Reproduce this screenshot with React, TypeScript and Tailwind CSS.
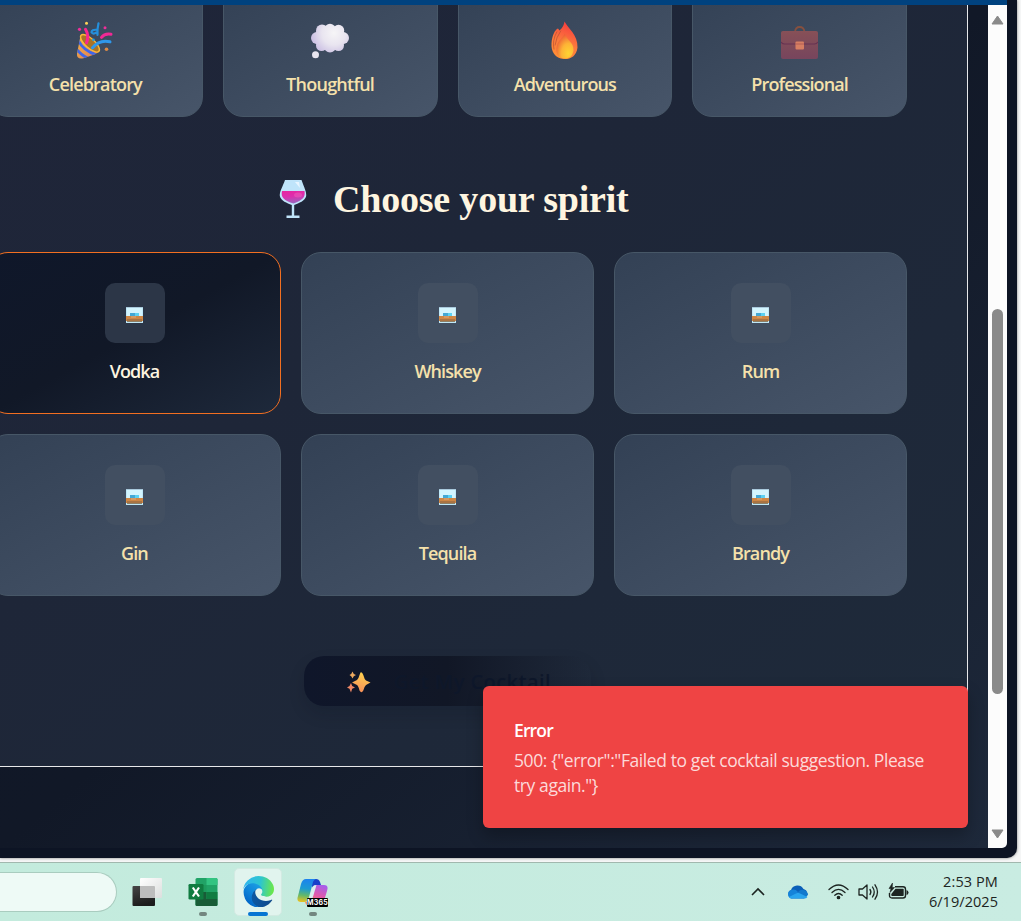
import React from "react";

const PartyIcon = () => (
  <svg width="38" height="40" viewBox="0 0 38 40">
    <defs>
      <linearGradient id="cone" x1="0" y1="0" x2="1" y2="1">
        <stop offset="0" stopColor="#f6b53c" />
        <stop offset="1" stopColor="#dd7a5c" />
      </linearGradient>
      <clipPath id="coneClip">
        <path d="M5 15 Q7 13 13 18 Q24 26 24 30 Q23 33 8 37.500 Q1 39 1.500 33 Z" />
      </clipPath>
    </defs>
    <g transform="translate(-0.5 0.8)">
      <path d="M5 15 Q7 13 13 18 Q24 26 24 30 Q23 33 8 37.500 Q1 39 1.500 33 Z" fill="url(#cone)" />
      <g clipPath="url(#coneClip)" stroke="#3f66e8" strokeWidth="2.800" fill="none">
        <path d="M3 20 Q8 30 21 34" />
        <path d="M0 27 Q4 33 13 38" />
      </g>
      <ellipse cx="14.500" cy="22.500" rx="12" ry="4.700" transform="rotate(42 14.500 22.500)" fill="#a87325" stroke="#fbb93a" strokeWidth="1.400" />
      <g fill="none" strokeLinecap="round" strokeWidth="3">
        <path d="M11 22 Q14 15 10 8.500" stroke="#fb2590" />
        <path d="M26 16.500 Q29 12.500 35.500 13.500" stroke="#f12995" />
        <path d="M17 27 Q24 18.500 34.500 21" stroke="#2f97ea" />
        <path d="M23 2.500 Q21.500 9 22 14 M21.500 9 Q16 8.500 16 11.500 Q17.500 14 21 11.500" stroke="#2590dc" strokeWidth="2.200" />
      </g>
      <circle cx="11" cy="2.500" r="1.500" fill="#ffd257" />
      <circle cx="4" cy="8.500" r="1.600" fill="#ef2e9a" />
      <circle cx="29.500" cy="7" r="1.500" fill="#ef2e9a" />
      <circle cx="31" cy="28.500" r="1.800" fill="#dc8a45" />
      <circle cx="18" cy="19" r="1.300" fill="#1ca0e8" />
    </g>
  </svg>
);

const ThoughtIcon = () => (
  <svg width="38" height="40" viewBox="0 0 38 40">
    <defs>
      <radialGradient id="cloud" gradientUnits="userSpaceOnUse" cx="23" cy="13" r="24">
        <stop offset="0" stopColor="#f6f5f7" />
        <stop offset="0.5" stopColor="#e9e5f0" />
        <stop offset="1" stopColor="#c8bce2" />
      </radialGradient>
    </defs>
    <g fill="url(#cloud)">
      <ellipse cx="19" cy="18" rx="16" ry="12" />
      <circle cx="11" cy="10.500" r="6" />
      <circle cx="19" cy="9.500" r="5.700" />
      <circle cx="27.500" cy="10.500" r="5.700" />
      <circle cx="32" cy="18" r="6" />
      <circle cx="6" cy="18" r="6" />
      <circle cx="10.500" cy="25.500" r="5.500" />
      <circle cx="19" cy="26.500" r="6" />
      <circle cx="27.500" cy="25.500" r="5.500" />
    </g>
    <circle cx="4.500" cy="34.700" r="3.500" fill="#e9e6f0" />
  </svg>
);

const FireIcon = () => (
  <svg width="38" height="40" viewBox="0 0 38 40">
    <defs>
      <linearGradient id="flame" x1="0.8" y1="0" x2="0.5" y2="1">
        <stop offset="0" stopColor="#f6353e" />
        <stop offset="0.6" stopColor="#fb7a3d" />
        <stop offset="1" stopColor="#ff8d36" />
      </linearGradient>
      <radialGradient id="core" cx="0.7" cy="0.8" r="0.8">
        <stop offset="0" stopColor="#ffd432" />
        <stop offset="0.5" stopColor="#fdb336" />
        <stop offset="1" stopColor="#ec5c36" />
      </radialGradient>
    </defs>
    <g transform="translate(-1 0.5)">
      <path d="M19.500 1 C23 8 33 14 32.500 27 C31.500 36 25 39 19 38.500 C10 38 6 31 6.500 23 C7 15 10 9 13 8 L14.500 10 C18 7 19 4 19.500 1Z" fill="url(#flame)" />
      <path d="M12 11 Q7 20 9 29 M16 10 Q11 17 10 25" stroke="#ba5032" fill="none" opacity="0.700" />
      <path d="M20 13 C21 20 29 21 28.500 30 C27.500 36 24 38 20 38 C13 38 10 32 12 25 C13 20 18 17 20 13Z" fill="url(#core)" />
    </g>
  </svg>
);

const CaseIcon = () => (
  <svg width="38" height="40" viewBox="0 0 38 40">
    <defs>
      <linearGradient id="case" x1="0" y1="0" x2="0" y2="1">
        <stop offset="0" stopColor="#875057" />
        <stop offset="1" stopColor="#77455d" />
      </linearGradient>
    </defs>
    <path d="M14 12 Q14.500 7 18.500 7 Q23 7 23.500 12" fill="none" stroke="#86503f" strokeWidth="1.800" />
    <rect x="0" y="11" width="37" height="28" rx="2" fill="url(#case)" />
    <path d="M0 22 Q1.500 24 3.500 24 H33.500 Q35.500 24 37 22" fill="none" stroke="#663252" strokeWidth="1.200" />
    <rect x="14.500" y="21.500" width="8.500" height="8" rx="1" fill="#d77e62" />
    <path d="M14.500 24 H23" stroke="#b35c54" />
  </svg>
);

const WineIcon = () => (
  <svg width="28" height="40" viewBox="0 0 28 40">
    <defs>
      <linearGradient id="wine" x1="0" y1="0" x2="0.2" y2="1">
        <stop offset="0" stopColor="#e8259f" />
        <stop offset="0.5" stopColor="#dc2fae" />
        <stop offset="1" stopColor="#9d62bd" />
      </linearGradient>
    </defs>
    <path d="M6 1 H22.500 C25 8 27.700 13 27.200 17 C26 22 20 24 15.200 26 V36.500 H20.500 V39 H7.500 V36.500 H12.800 V26 C8 24 2 22 0.800 17 C0.500 12 4 7 6 1Z" fill="#bfe4fa" />
    <path d="M3 12 H25.500 C26.500 18 24 21 14.500 24.500 C5 22 1.500 18 3 12Z" fill="url(#wine)" />
    <ellipse cx="19" cy="16" rx="4" ry="2.500" fill="#f56fc0" opacity="0.400" />
    <path d="M16 3 H20 L21 9 Z" fill="#e8f5ff" />
  </svg>
);

const SparkleIcon = () => (
  <svg className="mt-[3px]" width="24" height="24" viewBox="0 0 24 24">
    <defs>
      <linearGradient id="spark" x1="0.6" y1="0" x2="0.3" y2="1">
        <stop offset="0" stopColor="#ffd34e" />
        <stop offset="1" stopColor="#f78c5a" />
      </linearGradient>
    </defs>
    <path d="M13.500 1.500 Q15 0.500 16.300 4 Q17.500 8.500 19 9.500 L23.500 11.500 L19 14 Q17.500 15 16.300 19.500 Q14.500 23 12.500 19.500 Q11.500 15 10 14 L5 11.500 L10 9 Q11.500 8 12.500 4Z" fill="url(#spark)" />
    <path d="M5.500 0.500 L6.800 3 L9 4 L6.800 5.200 L5.500 7.500 L4.200 5.200 L2.500 4 L4.200 3Z" fill="#eca95f" />
    <path d="M4 12 L5.200 15 L8 16.500 L5.200 17.700 L4 21.500 L2.500 17.700 L0 16.500 L2.500 15Z" fill="#ef8866" />
  </svg>
);

const TumblerIcon = () => (
  <svg width="17" height="16" viewBox="0 0 17 16" shapeRendering="crispEdges">
    <rect width="17" height="16" fill="#bfe8f8" />
    <rect x="1" y="1" width="15" height="9" fill="#d3f5fe" />
    <rect width="17" height="1" fill="#a9c9dc" />
    <rect x="4" y="6" width="9" height="3" fill="#5bd1f2" />
    <rect x="4" y="6" width="5" height="3" fill="#43a8d5" />
    <rect y="9" width="17" height="5" fill="#cf8745" />
    <rect x="5" y="9" width="5" height="2" fill="#d49a62" />
    <rect x="1" y="12" width="15" height="2" fill="#a97443" />
    <rect x="1" y="14" width="15" height="1" fill="#8c8068" />
  </svg>
);

const moods = [
  { name: "Celebratory", icon: <PartyIcon />, tracking: "tracking-[-0.82px]" },
  { name: "Thoughtful", icon: <ThoughtIcon />, tracking: "tracking-[-0.75px]" },
  { name: "Adventurous", icon: <FireIcon />, tracking: "tracking-[-0.9px]" },
  { name: "Professional", icon: <CaseIcon />, tracking: "tracking-[-0.88px]" },
];

const spirits = ["Vodka", "Whiskey", "Rum", "Gin", "Tequila", "Brandy"];

function MoodCard({ name, icon, tracking }: { name: string; icon: React.ReactNode; tracking: string }) {
  return (
    <div className="flex h-[132px] flex-col items-center rounded-[20px] border border-[#475767] bg-linear-to-br from-[#334155] to-[#475569] pt-[34px]">
      {icon}
      <span className={`mt-[11px] text-[18px] leading-[26px] font-semibold text-[#f5e1ab] ${tracking}`}>{name}</span>
    </div>
  );
}

function SpiritCard({ name, selected }: { name: string; selected: boolean }) {
  return (
    <div
      className={`flex h-[162px] flex-col items-center rounded-[20px] border pt-[30px] ${
        selected
          ? "border-[#f26f21] bg-linear-to-br from-[#0f172a] via-[#111827] to-[#1e293b]"
          : "border-[#475767] bg-linear-to-br from-[#334155] to-[#475569]"
      }`}
    >
      <div className={`flex size-[60px] items-center justify-center rounded-[10px] pt-[4px] ${selected ? "bg-[#2c3647]" : "bg-[#424f61]"}`}>
        <TumblerIcon />
      </div>
      <span className={`mt-[15px] text-[18px] leading-[26px] font-semibold tracking-[-0.9px] ${selected ? "text-[#fef5e0]" : "text-[#f5e1ab]"}`}>
        {name}
      </span>
    </div>
  );
}

function Toast() {
  return (
    <div className="absolute top-[681px] left-[483px] h-[142px] w-[485px] rounded-[6px] bg-[#ef4444] pt-[31px] pl-[31px] shadow-[0_8px_16px_rgba(0,0,0,0.25)]">
      <div className="text-[17.5px] leading-[26px] font-semibold tracking-[-0.85px] text-white">Error</div>
      <div className="mt-[5px] text-[17.5px] leading-[25px] tracking-[-0.41px] text-[#fcdada]">
        500: {'{"error":"Failed to get cocktail suggestion. Please'}
        <br />
        {'try again."}'}
      </div>
    </div>
  );
}

function Scrollbar() {
  return (
    <div className="flex w-[19px] flex-col items-center rounded-br-[5px] bg-[#fcfcfc] pt-[9px] pb-[8px]">
      <svg width="15" height="12" viewBox="0 0 15 12">
        <path d="M7.500 2 L13 10 H2Z" fill="#8a8a8a" stroke="#8a8a8a" strokeLinejoin="round" />
      </svg>
      <div className="mt-[283px] h-[385px] w-[11px] rounded-full bg-[#8a8a8a]" />
      <div className="grow" />
      <svg width="15" height="12" viewBox="0 0 15 12">
        <path d="M7.500 10 L13 2 H2Z" fill="#8a8a8a" stroke="#8a8a8a" strokeLinejoin="round" />
      </svg>
    </div>
  );
}

function BrowserWindow() {
  return (
    <div className="h-[858px] w-[1017px] rounded-br-[10px] bg-[#0d1424] pr-[10px] shadow-[0_0_3px_rgba(0,0,0,0.5)]">
      <div className="h-[5px] bg-[#00427f]" />
      <div className="relative flex h-[843px] overflow-hidden">
        <div className="w-[988px] overflow-hidden bg-linear-to-br from-[#0f172a] via-[#111827] to-[#1e293b]">
          <main className="flex h-[762px] w-[968px] flex-col border-r border-b border-[#e7e8ea] bg-linear-to-br from-[#1f2539] via-[#1e2638] via-40% to-[#1e2a3a]">
            <div className="-mt-[20px] -ml-[12px] w-[919px]">
              <div className="grid grid-cols-4 gap-[20px]">
                {moods.map((m) => (
                  <MoodCard key={m.name} {...m} />
                ))}
              </div>
              <div className="mt-[58px] flex h-[48px] items-center pl-[291px]">
                <WineIcon />
                <h2 className="ml-[26px] font-['Liberation_Serif',serif] text-[38px] leading-[48px] font-bold tracking-[-0.2px] text-[#fef5e0]">
                  Choose your spirit
                </h2>
              </div>
              <div className="mt-[29px] grid grid-cols-3 gap-[20px]">
                {spirits.map((s) => (
                  <SpiritCard key={s} name={s} selected={s === "Vodka"} />
                ))}
              </div>
              <button className="mx-auto mt-[60px] flex h-[50px] w-[287px] items-center justify-between rounded-[20px] bg-linear-to-r from-[#0f162a] via-[#111726] via-50% to-transparent pr-[40px] pl-[43px] shadow-[0_8px_16px_rgba(10,16,30,0.15)]">
                <SparkleIcon />
                <span className="pt-[1px] text-[20px] font-semibold tracking-[0.45px] text-[#0e172a]">Get My Cocktail</span>
              </button>
            </div>
          </main>
        </div>
        <Scrollbar />
        <Toast />
      </div>
    </div>
  );
}

const TaskViewIcon = () => (
  <svg width="30" height="30" viewBox="0 0 30 30">
    <defs>
      <linearGradient id="tvb" x1="0" y1="0" x2="0.3" y2="1">
        <stop offset="0" stopColor="#454545" />
        <stop offset="1" stopColor="#1c1c1c" />
      </linearGradient>
      <linearGradient id="tvf" x1="0" y1="0" x2="1" y2="1">
        <stop offset="0" stopColor="#ffffff" />
        <stop offset="1" stopColor="#dcdedd" />
      </linearGradient>
    </defs>
    <rect x="0.500" y="9" width="22.500" height="20" rx="1" fill="url(#tvb)" />
    <rect x="8" y="1" width="22" height="20" rx="1" fill="url(#tvf)" />
    <path d="M8 9 H22 Q23 9 23 10 V21 H9 Q8 21 8 20Z" fill="#bdbdbd" />
  </svg>
);

const ExcelIcon = () => (
  <svg width="30" height="30" viewBox="0 0 30 30">
    <rect x="7.500" y="1" width="22" height="28" rx="1.500" fill="#21a366" />
    <path d="M18.500 1 H28 Q29.500 1 29.500 2.500 V8 H18.500Z" fill="#33c481" />
    <rect x="7.500" y="8" width="11" height="7" fill="#1d9c5d" />
    <rect x="7.500" y="15" width="11" height="7" fill="#185c37" />
    <rect x="18.500" y="15" width="11" height="7" fill="#107c41" />
    <path d="M7.500 22 H29.500 V27.500 Q29.500 29 28 29 H9 Q7.500 29 7.500 27.500Z" fill="#185c37" />
    <rect x="0.500" y="7" width="15" height="15.500" rx="1.300" fill="#107c41" />
    <path d="M4.800 10.500 L11 19.500 M11 10.500 L4.800 19.500" stroke="#fff" strokeWidth="2.200" />
  </svg>
);

const EdgeIcon = () => (
  <svg className="shrink-0" width="31" height="31" viewBox="0 0 256 256">
    <defs>
      <linearGradient id="e1" x1="60" y1="177" x2="240" y2="177" gradientUnits="userSpaceOnUse">
        <stop offset="0" stopColor="#0c59a4" />
        <stop offset="1" stopColor="#114a8b" />
      </linearGradient>
      <linearGradient id="e2" x1="153" y1="90" x2="45" y2="220" gradientUnits="userSpaceOnUse">
        <stop offset="0" stopColor="#1b9de2" />
        <stop offset="0.5" stopColor="#0f86db" />
        <stop offset="1" stopColor="#0468c8" />
      </linearGradient>
      <linearGradient id="e3" x1="10" y1="60" x2="250" y2="90" gradientUnits="userSpaceOnUse">
        <stop offset="0" stopColor="#2fb6ef" />
        <stop offset="0.55" stopColor="#2dc5cf" />
        <stop offset="1" stopColor="#6ae74b" />
      </linearGradient>
    </defs>
    <path fill="url(#e1)" d="M235.700 195.500a93.700 93.700 0 0 1-10.600 4.700 101.900 101.900 0 0 1-35.900 6.400c-47.300 0-88.500-32.500-88.500-74.300a31.500 31.500 0 0 1 16.400-27.300c-42.800 1.800-53.800 46.400-53.800 72.500 0 74 68.100 81.400 82.800 81.400 7.900 0 19.800-2.300 27-4.600l1.300-.4a128.300 128.300 0 0 0 66.600-52.800 4 4 0 0 0-5.300-5.600z" />
    <path fill="url(#e2)" d="M110.300 246.300A79.200 79.200 0 0 1 87.600 225a80.700 80.700 0 0 1 29.500-120c3.200-1.500 8.500-4.100 15.600-4a32.400 32.400 0 0 1 25.700 13 31.900 31.900 0 0 1 6.300 18.700c0-.2 24.500-79.600-80-79.600-43.900 0-80 41.700-80 78.200a130.200 130.200 0 0 0 12.100 56 128 128 0 0 0 156.400 67 75.500 75.500 0 0 1-62.800-8z" />
    <path fill="url(#e3)" d="M152.300 148.900c-.8 1-3.300 2.500-3.300 5.700 0 2.600 1.700 5.100 4.700 7.200 14.400 10 41.500 8.700 41.600 8.700a59.600 59.600 0 0 0 30.300-8.300 61.400 61.400 0 0 0 30.400-52.900c.3-22.400-8-37.300-11.300-43.900C223.500 23.900 177.700 0 128 0A128 128 0 0 0 0 126.200c.5-36.500 36.800-66 80-66 3.500 0 23.500.3 42 10 16.300 8.600 24.900 19 30.800 29.200 6.200 10.700 7.300 24.100 7.300 29.500 0 5.300-2.700 13.300-7.800 20z" />
  </svg>
);

const CopilotIcon = () => (
  <svg width="31" height="31" viewBox="0 0 31 31">
    <defs>
      <linearGradient id="c1" x1="0.3" y1="0" x2="0.2" y2="1">
        <stop offset="0" stopColor="#1c83ed" />
        <stop offset="0.4" stopColor="#1c9bd2" />
        <stop offset="0.7" stopColor="#63b86a" />
        <stop offset="1" stopColor="#f0c11c" />
      </linearGradient>
      <linearGradient id="c2" x1="0.7" y1="0" x2="0.3" y2="1">
        <stop offset="0" stopColor="#a85de9" />
        <stop offset="0.5" stopColor="#e45aa7" />
        <stop offset="1" stopColor="#fb9255" />
      </linearGradient>
    </defs>
    <path d="M15 2 H19 Q22 2 23 5 L24 8 H19 Q16 8 15 11Z" fill="#173fca" />
    <path d="M9 2 H19 Q16 3 15.500 7 L12 20 Q11 25 7 25 H4 Q-1 25 1 19 L4 7 Q5.500 2 9 2Z" fill="url(#c1)" />
    <path d="M19 8 H27 Q32 8 30 14 L27 24 Q25 29 21 29 H13 Q9 29 8 25 Q11 25 12.500 22 L16 11 Q17 8 19 8Z" fill="url(#c2)" />
    <path d="M15.500 10 Q17 8 19.500 8 L15 23 Q14 25 11 25Z" fill="#d9eff0" />
  </svg>
);

function Taskbar() {
  return (
    <div className="flex h-[59px] border-t border-[#a1b8ae] bg-linear-to-r from-[#c3ebdd] to-[#c9ece2]">
      <div className="mt-[9px] h-[40px] w-[117px] shrink-0 rounded-r-full border border-l-0 border-[#a9ccbf] bg-[#eefaf6]" />
      <div className="mt-[14px] ml-[15px] shrink-0">
        <TaskViewIcon />
      </div>
      <div className="mt-[14px] ml-[26px] flex w-[30px] shrink-0 flex-col items-center">
        <ExcelIcon />
        <div className="mt-[5px] h-[4px] w-[8px] rounded-full bg-[#738780]" />
      </div>
      <div className="mt-[5px] ml-[16px] flex h-[48px] w-[48px] shrink-0 flex-col items-center rounded-[5px] border border-[#d3eae2] bg-[#e1f4ee] pt-[7px]">
        <EdgeIcon />
        <div className="mt-[5px] h-[4px] w-[20px] shrink-0 rounded-full bg-[#0675d3]" />
      </div>
      <div className="relative mt-[14px] ml-[15px] flex w-[31px] shrink-0 flex-col items-center">
        <CopilotIcon />
        <div className="absolute top-[21px] left-[10px] flex h-[9px] w-[21px] items-center justify-center rounded-[1px] bg-black font-['Inter',sans-serif] text-[7px] leading-none font-bold tracking-[0.2px] text-white">
          M365
        </div>
        <div className="mt-[4px] h-[4px] w-[8px] rounded-full bg-[#738780]" />
      </div>
      <div className="grow" />
      <div className="flex items-center pb-[1px]">
        <svg width="16" height="10" viewBox="0 0 16 10">
          <path d="M2 8 L8 2 L14 8" fill="none" stroke="#1c2421" strokeWidth="1.600" />
        </svg>
        <svg className="ml-[21px]" width="22" height="14" viewBox="0 0 22 14">
          <path d="M5 13.500 A4.500 4.500 0 0 1 4 5 A7 7 0 0 1 16.500 4 A5 5 0 0 1 17 13.500Z" fill="#0a5fb8" />
          <path d="M4.500 5 Q8 3.500 11 7 L5 13.500 A4.300 4.300 0 0 1 4.500 5Z" fill="#1583d9" />
          <path d="M11 7 Q14 3.500 18 5.500 Q21 7 21 10 L17 13Z" fill="#1279cd" />
          <path d="M2 12 L11 7.500 L20.500 12 Q19.500 13.500 17 13.500 H5 Q3 13.500 2 12Z" fill="#29a4ee" />
        </svg>
        <svg className="ml-[19px]" width="21" height="16" viewBox="0 0 21 16" fill="none" stroke="#1c2421" strokeWidth="1.300" strokeLinecap="round">
          <path d="M1 5.500 Q10.500 -3.500 20 5.500" />
          <path d="M4 8.500 Q10.500 2.300 17 8.500" />
          <path d="M6.800 11.300 Q10.500 7.800 14.200 11.300" />
          <circle cx="10.500" cy="13.500" r="1.200" fill="#1c2421" />
        </svg>
        <svg className="ml-[9px]" width="21" height="18" viewBox="0 0 21 18" fill="none" stroke="#1c2421" strokeWidth="1.300" strokeLinejoin="round" strokeLinecap="round">
          <path d="M1 6 H4.500 L9 2 V16 L4.500 12 H1Z" />
          <path d="M12 6.500 Q13.800 9 12 11.500" />
          <path d="M14.500 4 Q18 9 14.500 14" />
          <path d="M17 1.800 Q22 9 17 16.200" />
        </svg>
        <svg className="ml-[9px]" width="21" height="18" viewBox="0 0 21 18">
          <path d="M7 3.800 H15 Q17.500 3.800 17.500 6.300 V12.500 Q17.500 15 15 15 H4 Q1.500 15 1.500 12.500 V10" fill="none" stroke="#1c2421" strokeWidth="1.400" />
          <path d="M7.500 5.700 H15 Q15.700 5.700 15.700 6.400 V12.300 Q15.700 13 15 13 H4 Q3.300 13 3.300 12.300 V11Z" fill="#1c2421" />
          <path d="M18.500 7 Q20.500 7.500 20.500 9.500 Q20.500 11.500 18.500 12Z" fill="#1c2421" />
          <path d="M4.500 0 L1 5.500 H3 L2 9.500 L6.500 4.500 H4.200Z" fill="#1c2421" stroke="#1c2421" strokeWidth="0.600" />
        </svg>
      </div>
      <div className="mr-[23px] ml-[19px] flex w-[70px] shrink-0 flex-col items-end pt-[9px] text-[14.500px] leading-[20px] whitespace-nowrap text-[#1c2421]">
        <span className="tracking-[0.1px]">2:53 PM</span>
        <span className="tracking-[0.05px]">6/19/2025</span>
      </div>
    </div>
  );
}

export default function App() {
  return (
    <div className="flex h-[921px] w-[1021px] flex-col overflow-hidden bg-[#f5f6f6] font-['Open_Sans','Noto_Sans',sans-serif]">
      <BrowserWindow />
      <div className="h-[4px] shrink-0" />
      <Taskbar />
    </div>
  );
}
